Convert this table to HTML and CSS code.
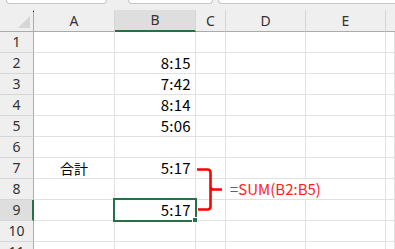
FILE: index.html
```html
<!DOCTYPE html>
<html lang="ja">
<head>
<meta charset="utf-8">
<link rel="stylesheet" href="styles.css">
</head>
<body>
<div class="topbar">
  <div class="box box-name"></div>
  <div class="box box-mid"></div>
  <div class="box box-formula"></div>
</div>
<div class="sheet">
  <div class="corner"><span class="dot"></span><span class="tri"></span></div>
  <div class="ch">A</div>
  <div class="ch ch-sel">B</div>
  <div class="ch">C</div>
  <div class="ch">D</div>
  <div class="ch">E</div>
  <div class="ch ch-last"></div>

  <div class="rh">1</div><div class="c"></div><div class="c"></div><div class="c"></div><div class="c"></div><div class="c"></div><div class="c"></div>
  <div class="rh">2</div><div class="c"></div><div class="c num">8:15</div><div class="c"></div><div class="c"></div><div class="c"></div><div class="c"></div>
  <div class="rh">3</div><div class="c"></div><div class="c num">7:42</div><div class="c"></div><div class="c"></div><div class="c"></div><div class="c"></div>
  <div class="rh">4</div><div class="c"></div><div class="c num">8:14</div><div class="c"></div><div class="c"></div><div class="c"></div><div class="c"></div>
  <div class="rh">5</div><div class="c"></div><div class="c num">5:06</div><div class="c"></div><div class="c"></div><div class="c"></div><div class="c"></div>
  <div class="rh">6</div><div class="c"></div><div class="c"></div><div class="c"></div><div class="c"></div><div class="c"></div><div class="c"></div>
  <div class="rh">7</div><div class="c center">合計</div><div class="c num">5:17</div><div class="c"></div><div class="c"></div><div class="c"></div><div class="c"></div>
  <div class="rh">8</div><div class="c"></div><div class="c"></div><div class="c"></div><div class="c note">=SUM(B2:B5)</div><div class="c"></div>
  <div class="rh rh-sel">9</div><div class="c"></div><div class="c num">5:17</div><div class="c"></div><div class="c"></div><div class="c"></div><div class="c"></div>
  <div class="rh">10</div><div class="c"></div><div class="c"></div><div class="c"></div><div class="c"></div><div class="c"></div><div class="c"></div>
  <div class="rh">11</div><div class="c"></div><div class="c"></div><div class="c"></div><div class="c"></div><div class="c"></div><div class="c"></div>

  <div class="selection"></div>
  <div class="handle"></div>
  <svg class="bracket" width="40" height="60" viewBox="190 160 40 60">
    <path d="M197,169.5 L207.5,169.5 Q210.5,169.5 210.5,172.5 L210.5,186.5 Q210.5,189.5 213.5,189.5 L222,189.5 M210.5,186.5 L210.5,206.5 Q210.5,209.5 207.5,209.5 L198,209.5" fill="none" stroke="#ff0000" stroke-width="2.6" stroke-linecap="butt" stroke-linejoin="round"/>
  </svg>
</div>
</body>
</html>
```

FILE: styles.css
```css
html, body {
  margin: 0;
  padding: 0;
  background: #ffffff;
  overflow: hidden;
}

body {
  width: 395px;
  height: 249px;
  font-family: "Noto Sans CJK JP", sans-serif;
}

.topbar {
  height: 10px;
  background: #efefef;
  display: flex;
  align-items: flex-start;
}

.box {
  height: 3px;
  background: #ffffff;
  border: 1px solid #c6c6c6;
  border-top: none;
  border-radius: 0 0 4px 4px;
}

.box-name {
  margin-left: 6px;
  width: 99px;
}

.box-mid {
  margin-left: 21px;
  width: 83px;
}

.box-formula {
  margin-left: 5px;
  flex: 1;
  margin-right: -6px;
}

.sheet {
  position: relative;
  display: grid;
  grid-template-columns: 34px 81px 81px 30px 80px 80px 1fr;
  grid-template-rows: 22px;
  grid-auto-rows: 21px;
}

.sheet > div {
  box-sizing: border-box;
}

.corner {
  position: relative;
  background: #efefef;
  border-right: 1px solid #ababab;
  border-bottom: 1px solid #ababab;
}

.corner .tri {
  position: absolute;
  right: 3px;
  bottom: 3px;
  width: 0;
  height: 0;
  border-left: 12px solid transparent;
  border-bottom: 12px solid #d6d6d6;
}

.corner .dot {
  position: absolute;
  right: -1px;
  top: 1px;
  width: 1px;
  height: 1px;
  background: #000;
}

.ch {
  background: #efefef;
  border-right: 1px solid #d6d6d6;
  border-bottom: 1px solid #ababab;
  font-family: "Noto Sans", sans-serif;
  font-size: 14px;
  line-height: 21px;
  color: #333333;
  text-align: center;
}

.ch-sel {
  background: #dedede;
  border-bottom: 2px solid #217346;
  line-height: 20px;
}

.ch-last {
  border-right: none;
}

.rh {
  background: #efefef;
  border-right: 1px solid #ababab;
  border-bottom: 1px solid #d6d6d6;
  font-family: "Noto Sans", sans-serif;
  font-size: 14px;
  line-height: 20px;
  color: #333333;
  text-align: center;
}

.rh-sel {
  background: #dedede;
  border-right: 2px solid #217346;
  padding-left: 1px;
}

.c {
  background: #ffffff;
  border-right: 1px solid #e1e1e1;
  border-bottom: 1px solid #e1e1e1;
  font-size: 14px;
  line-height: 20px;
  color: #000000;
  white-space: nowrap;
}

.num {
  text-align: right;
  padding-right: 4px;
  font-size: 15px;
  line-height: 19px;
  letter-spacing: 0.3px;
}

.center {
  text-align: center;
}

.note {
  grid-column: span 2;
  color: #ff2020;
  padding-left: 4px;
  font-size: 15px;
}

.selection {
  position: absolute;
  left: 113px;
  top: 188px;
  width: 84px;
  height: 24px;
  box-sizing: border-box;
  border: 2px solid #217346;
}

.handle {
  position: absolute;
  left: 192px;
  top: 207px;
  width: 6px;
  height: 6px;
  background: #217346;
  border: 1px solid #ffffff;
}

.bracket {
  position: absolute;
  left: 190px;
  top: 150px;
}
```
